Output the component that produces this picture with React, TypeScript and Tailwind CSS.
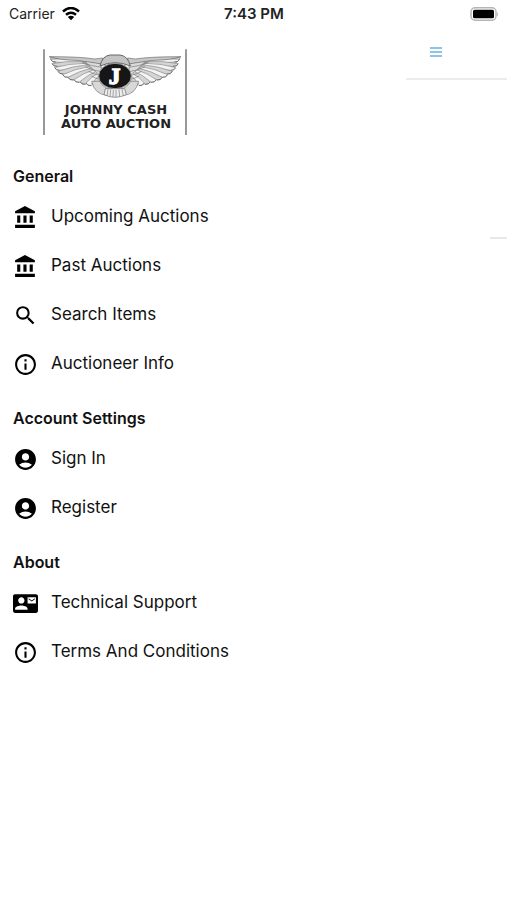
import type { ReactNode } from "react";
import { MdAccountCircle, MdContactMail, MdInfoOutline, MdSearch } from "react-icons/md";

const outerTips = [
  [44, 58], [48, 71], [56, 83], [66, 94], [80, 104], [96, 112], [114, 119], [132, 125], [150, 129], [168, 131],
];

function Wing() {
  return (
    <g stroke="#8a8a8a" strokeWidth="2" strokeLinejoin="round">
      <path fill="#dcdcdc" d="M42 53 Q120 54 196 70 V124 L168 128 Q80 112 42 53 Z" />
      {outerTips.map(([x, y], i) => (
        <g key={i}>
          <path
            fill={i % 2 ? "#d4d4d4" : "#f4f4f4"}
            d={`M${130 + i * 7} ${60 + i * 5} Q${(x + 130 + i * 7) / 2} ${(y + 60 + i * 5) / 2 - 6} ${x} ${y} Q${x + 4} ${y + 9} ${x + 16} ${y + 8} Q${(x + 160 + i * 6) / 2} ${(y + 84 + i * 4) / 2} ${152 + i * 5} ${68 + i * 5} Z`}
          />
          <path
            fill="none"
            stroke="#555"
            d={`M${x} ${y} Q${x + 4} ${y + 9} ${x + 16} ${y + 8}`}
          />
        </g>
      ))}
      <path fill="none" stroke="#777" d="M138 68 Q166 78 196 82 M148 80 Q170 92 192 94 M158 94 Q176 104 190 106 M166 108 Q180 116 192 118" />
      <path fill="#c8c8c8" stroke="#666" d="M40 50 Q110 50 152 54 Q178 60 200 54 L198 72 Q150 64 120 61 Q72 60 40 50 Z" />
    </g>
  );
}

function Logo() {
  return (
    <svg className="h-[87px] w-[145px]" viewBox="21 27 435 261" role="img" aria-label="Johnny Cash Auto Auction">
      <path stroke="#666" strokeWidth="4" d="M24 28V285M450 28V285" />
      <Wing />
      <g transform="translate(475 0) scale(-1 1)">
        <Wing />
      </g>
      <path fill="#d8d8d8" stroke="#777" strokeWidth="2" d="M167 124 Q176 164 214 166 L261 166 Q299 164 308 124 L284 124 Q272 148 237 150 Q202 148 191 124 Z" />
      <path fill="#eee" stroke="#666" strokeWidth="2" d="M208 146 L204 164 Q237 180 271 164 L266 146 Z" />
      <path stroke="#777" strokeWidth="2" d="M216 148L213 168M224 149L222 170M232 150L231 171M240 150V171M249 149L251 170M258 148L262 168" />
      <path fill="#c4c4c4" stroke="#666" strokeWidth="3" d="M192 78 Q198 48 222 45 H252 Q276 48 283 78 Q237 58 192 78 Z" />
      <ellipse cx="237" cy="108" rx="49" ry="38" fill="#161616" stroke="#999" strokeWidth="3" />
      <text x="236" y="131" textAnchor="middle" fill="#fff" stroke="#fff" strokeWidth="4" className="font-['Liberation_Serif',serif] text-[70px] font-bold">J</text>
      <g fill="#222" className="font-['DejaVu_Sans',sans-serif] text-[39px] font-bold">
        <text x="240" y="221" textAnchor="middle">JOHNNY CASH</text>
        <text x="240" y="264" textAnchor="middle">AUTO AUCTION</text>
      </g>
    </svg>
  );
}

function BankIcon() {
  return (
    <svg className="size-[25px]" viewBox="0 0 24 24" fill="currentColor" aria-hidden="true">
      <path d="M4 10v7h3v-7H4zm6 0v7h3v-7h-3zM2 22h19v-3H2v3zm14-12v7h3v-7h-3zm-4.500-9L2 6v2h19V6l-9.500-5z" />
    </svg>
  );
}

function Section({ title, children }: { title: string; children: ReactNode }) {
  return (
    <section>
      <h2 className="pt-[18px] pb-1 text-base leading-6 font-semibold">{title}</h2>
      <ul>{children}</ul>
    </section>
  );
}

function Item({ icon, label }: { icon: ReactNode; label: string }) {
  return (
    <li>
      <a href="#" className="flex h-[49px] items-center gap-[13px]">
        <span className="pt-0.5 text-black">{icon}</span>
        <span className="pb-0.5 text-[17px] leading-6">{label}</span>
      </a>
    </li>
  );
}

function StatusBar() {
  return (
    <header className="grid h-7 grid-cols-3 items-center pr-2 pl-[9px] text-sm text-[#222]">
      <div className="flex items-center gap-[7px]">
        <span>Carrier</span>
        <svg className="h-[14px] w-[18px]" viewBox="0 0 18 14" fill="none" stroke="#000" strokeWidth="2.500" aria-label="Wi-Fi">
          <path d="M1 4.500Q9 -2.500 17 4.500M4 7.800Q9 3.600 14 7.800" />
          <path fill="#000" stroke="none" d="M5.800 10Q9 7.400 12.200 10L9 13.200Z" />
        </svg>
      </div>
      <time className="text-center text-[15px] font-semibold">7:43 PM</time>
      <svg className="h-[15px] w-[30px] justify-self-end" viewBox="0 0 30 15" aria-label="Battery full">
        <rect x="2" y="0.800" width="25" height="12.400" rx="4" fill="#fff" stroke="#b5b5b5" strokeWidth="1.500" />
        <rect x="4" y="2.800" width="21" height="8.500" rx="1.500" fill="#000" />
        <path d="M28 5Q30 7 28 9.500Z" fill="#b5b5b5" />
      </svg>
    </header>
  );
}

export default function App() {
  return (
    <div className="flex min-h-screen flex-col bg-white font-['Inter',sans-serif] text-[#111]">
      <StatusBar />
      <div className="flex flex-1">
        <nav className="w-4/5 pt-[21px] pl-[13px]" aria-label="Main menu">
          <div className="mb-[10px] pl-[30px]">
            <Logo />
          </div>
          <Section title="General">
            <Item icon={<BankIcon />} label="Upcoming Auctions" />
            <Item icon={<BankIcon />} label="Past Auctions" />
            <Item icon={<MdSearch className="size-[25px]" />} label="Search Items" />
            <Item icon={<MdInfoOutline className="size-[25px]" />} label="Auctioneer Info" />
          </Section>
          <Section title="Account Settings">
            <Item icon={<MdAccountCircle className="size-[25px]" />} label="Sign In" />
            <Item icon={<MdAccountCircle className="size-[25px]" />} label="Register" />
          </Section>
          <Section title="About">
            <Item icon={<MdContactMail className="size-[25px]" />} label="Technical Support" />
            <Item icon={<MdInfoOutline className="size-[25px]" />} label="Terms And Conditions" />
          </Section>
        </nav>
        <main className="flex flex-1 flex-col">
          <div className="flex h-[52px] items-center border-b-2 border-[#ececec] pb-0.5 pl-6">
            <button type="button" aria-label="Toggle menu" className="flex w-3 flex-col gap-0.5">
              <span className="h-0.5 bg-[#8cc4ea]" />
              <span className="h-0.5 bg-[#8cc4ea]" />
              <span className="h-0.5 bg-[#8cc4ea]" />
            </button>
          </div>
          <div className="mt-[157px] h-0.5 w-[17px] self-end bg-[#e8e8e8]" />
        </main>
      </div>
    </div>
  );
}
